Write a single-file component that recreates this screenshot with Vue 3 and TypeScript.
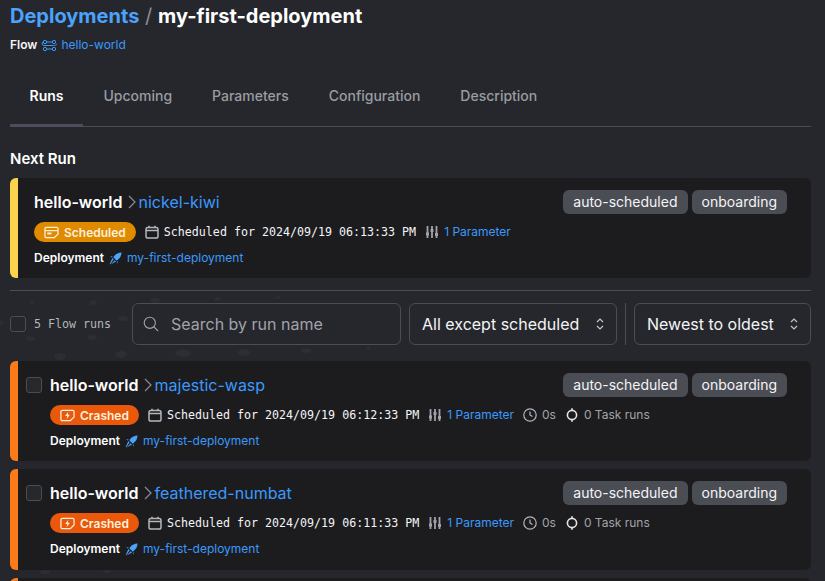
<script setup lang="ts">
interface FlowRun {
  name: string
  time: string
}

const tabs = ['Runs', 'Upcoming', 'Parameters', 'Configuration', 'Description']
const tags = ['auto-scheduled', 'onboarding']

const runs: FlowRun[] = [
  { name: 'majestic-wasp', time: '2024/09/19 06:12:33 PM' },
  { name: 'feathered-numbat', time: '2024/09/19 06:11:33 PM' },
]

// faint speckle that sits behind the run list
const spots = [
  [30, 301, 4, 3], [90, 300, 7, 5], [150, 298, 10, 5], [214, 297, 7, 4], [276, 296, 5, 3],
  [118, 316, 10, 5], [26, 336, 9, 5], [88, 335, 9, 5], [54, 353, 12, 7], [115, 351, 12, 7],
  [175, 349, 16, 8], [238, 349, 12, 7], [301, 348, 10, 5], [366, 347, 5, 3], [0, 320, 3, 5],
  [40, 570, 10, 4], [103, 570, 8, 3],
]
</script>

<template>
  <div class="page">
    <span
      v-for="(s, i) in spots"
      :key="i"
      class="spot"
      :style="{ left: s[0] + 'px', top: s[1] + 'px', width: s[2] + 'px', height: s[3] + 'px' }"
    ></span>

    <h1 class="title"><a>Deployments</a> <span class="slash">/</span> my-first-deployment</h1>
    <div class="meta-line flow-line">
      <b>Flow</b>
      <svg class="flow-icon" viewBox="0 0 16 13" fill="none" stroke="currentColor" stroke-width="1">
        <circle cx="4" cy="3" r="1.700" />
        <circle cx="13" cy="3" r="1.700" />
        <circle cx="4" cy="10" r="1.700" />
        <circle cx="13" cy="10" r="1.700" />
        <path d="M5.700 3h5.600M5.700 10h5.600M2.300 3C.5 3 .5 6.500 3 6.500h9.500c1.500 0 3.200-.3 3.200-1.700" />
      </svg>
      <a>hello-world</a>
    </div>

    <nav class="tabs">
      <span v-for="(tab, i) in tabs" :key="tab" class="tab" :class="{ active: i === 0 }">{{ tab }}</span>
    </nav>

    <h2 class="section">Next Run</h2>

    <section class="card next">
      <div class="card-body">
        <div class="row-top">
          <div class="run-name">
            <b>hello-world</b>
            <svg class="chevron" viewBox="0 0 8 16" fill="none" stroke="currentColor" stroke-width="1.200"><path d="M1 2l6 6-6 6" /></svg>
            <a>nickel-kiwi</a>
          </div>
          <div class="tags"><span v-for="tag in tags" :key="tag" class="tag">{{ tag }}</span></div>
        </div>
        <div class="row-meta">
          <span class="pill scheduled">
            <svg viewBox="0 0 16 16" fill="none" stroke="currentColor" stroke-width="1.300">
              <path d="M2.500 2.500h11A1.500 1.500 0 0 1 15 4v5.500l-4 4H2.500A1.500 1.500 0 0 1 1 12V4a1.500 1.500 0 0 1 1.500-1.500z" />
              <path d="M1 6h14" />
              <path fill="currentColor" stroke="none" d="M3.500 8h4.500v2H3.500z" />
            </svg>
            Scheduled
          </span>
          <svg class="ic cal" viewBox="0 0 14 14" fill="none" stroke="currentColor" stroke-width="1.500">
            <rect x="1" y="2.500" width="12" height="10.500" rx="1.800" />
            <path d="M1 5.500h12M4 .8v2M10 .8v2" />
          </svg>
          <span class="mono">Scheduled for 2024/09/19 06:13:33 PM</span>
          <svg class="ic sliders" viewBox="0 0 12 14" fill="none" stroke="currentColor" stroke-width="1.800">
            <path d="M1.500 1v12M6 1v12M10.500 1v12" />
            <path stroke-width="3" d="M0 9h3M4.500 5.500h3M9 9.500h3" />
          </svg>
          <a class="small">1 Parameter</a>
        </div>
        <div class="meta-line deploy">
          <b>Deployment</b>
          <svg class="rocket" viewBox="0 0 14 14" fill="currentColor">
            <path d="M13.500.5c-3.400.2-5.600 1.300-7.400 3.400L4.600 5.600l3.800 3.800 1.700-1.500C12.200 6.100 13.300 3.900 13.500.5z" />
            <path d="M3.700 6.500 5 7.800 1.300 13.200.8 12.700zM7.500 10.300 6.200 9 1.800 13.400zM3 5.800l1-1.200-2.800.3zM8.200 10.900l1.200-1-.3 2.800z" />
          </svg>
          <a>my-first-deployment</a>
        </div>
      </div>
    </section>

    <hr class="rule" />

    <div class="controls">
      <label class="count"><span class="check"></span><span class="mono dim">5 Flow runs</span></label>
      <div class="field search">
        <svg viewBox="0 0 16 16" fill="none" stroke="currentColor" stroke-width="1.100">
          <circle cx="6.800" cy="6.800" r="5.600" />
          <path d="m11 11 4.200 4.200" />
        </svg>
        <span>Search by run name</span>
      </div>
      <div class="field select status">
        <span>All except scheduled</span>
        <svg viewBox="0 0 8 12" fill="none" stroke="currentColor" stroke-width="1.200"><path d="M1 4l3-3 3 3M1 8l3 3 3-3" /></svg>
      </div>
      <span class="vr"></span>
      <div class="field select sort">
        <span>Newest to oldest</span>
        <svg viewBox="0 0 8 12" fill="none" stroke="currentColor" stroke-width="1.200"><path d="M1 4l3-3 3 3M1 8l3 3 3-3" /></svg>
      </div>
    </div>

    <section v-for="run in runs" :key="run.name" class="card crashed">
      <span class="check card-check"></span>
      <div class="card-body">
        <div class="row-top">
          <div class="run-name">
            <b>hello-world</b>
            <svg class="chevron" viewBox="0 0 8 16" fill="none" stroke="currentColor" stroke-width="1.200"><path d="M1 2l6 6-6 6" /></svg>
            <a>{{ run.name }}</a>
          </div>
          <div class="tags"><span v-for="tag in tags" :key="tag" class="tag">{{ tag }}</span></div>
        </div>
        <div class="row-meta">
          <span class="pill crash">
            <svg viewBox="0 0 16 16" fill="none" stroke="currentColor" stroke-width="1.300">
              <path d="M2.500 2.500h11A1.500 1.500 0 0 1 15 4v5.500l-4 4H2.500A1.500 1.500 0 0 1 1 12V4a1.500 1.500 0 0 1 1.500-1.500z" />
              <path fill="currentColor" stroke="none" d="M8.800 4 5.500 8.500h2.200L7 12l3.500-4.800H8.300z" />
            </svg>
            Crashed
          </span>
          <svg class="ic cal" viewBox="0 0 14 14" fill="none" stroke="currentColor" stroke-width="1.500">
            <rect x="1" y="2.500" width="12" height="10.500" rx="1.800" />
            <path d="M1 5.500h12M4 .8v2M10 .8v2" />
          </svg>
          <span class="mono">Scheduled for {{ run.time }}</span>
          <svg class="ic sliders" viewBox="0 0 12 14" fill="none" stroke="currentColor" stroke-width="1.800">
            <path d="M1.500 1v12M6 1v12M10.500 1v12" />
            <path stroke-width="3" d="M0 9h3M4.500 5.500h3M9 9.500h3" />
          </svg>
          <a class="small">1 Parameter</a>
          <svg class="ic clock" viewBox="0 0 14 14" fill="none" stroke="currentColor" stroke-width="1.200">
            <circle cx="7" cy="7" r="6.200" />
            <path d="M7 3.500V7l2.500 1.500" />
          </svg>
          <span class="small dim">0s</span>
          <svg class="ic task" viewBox="0 0 14 14" fill="none" stroke="currentColor" stroke-width="1.600">
            <circle cx="7" cy="7" r="4.600" />
            <path d="M7 .2v2.200M7 11.600v2.200" />
          </svg>
          <span class="small dim">0 Task runs</span>
        </div>
        <div class="meta-line deploy">
          <b>Deployment</b>
          <svg class="rocket" viewBox="0 0 14 14" fill="currentColor">
            <path d="M13.500.5c-3.400.2-5.600 1.300-7.400 3.400L4.600 5.600l3.800 3.800 1.700-1.500C12.200 6.100 13.300 3.900 13.500.5z" />
            <path d="M3.700 6.500 5 7.800 1.300 13.200.8 12.700zM7.500 10.300 6.200 9 1.800 13.400zM3 5.800l1-1.200-2.800.3zM8.200 10.900l1.200-1-.3 2.800z" />
          </svg>
          <a>my-first-deployment</a>
        </div>
      </div>
    </section>
    <!-- only the top edge of the next run is on screen -->
    <div class="card crashed"></div>
  </div>
</template>

<style scoped>
.page {
  position: relative;
  box-sizing: border-box;
  height: 581px;
  padding: 2px 14px 0 10px;
  overflow: hidden;
  background: #25272c;
  color: #fff;
  font-family: Inter, 'Noto Sans', sans-serif;
}

.spot {
  position: absolute;
  border-radius: 50%;
  background: #2c2e33;
}

a {
  color: #3b99fb;
}

svg {
  flex: none;
}

.title {
  position: relative;
  margin: 0;
  font-size: 20px;
  line-height: 28px;
  font-weight: 700;
}

.title a {
  color: #4ba3fb;
}

.slash {
  margin: 0 1px;
  color: #8b8d94;
  font-weight: 400;
}

.meta-line {
  position: relative;
  display: flex;
  align-items: center;
  font-size: 12px;
  line-height: 16px;
}

.meta-line b {
  font-weight: 600;
}

.flow-line {
  margin-top: 7px;
  gap: 4px;
  color: #3b99fb;
}

.flow-line b {
  color: #f4f4f5;
}

.flow-icon {
  width: 16px;
  height: 13px;
}

.tabs {
  position: relative;
  display: flex;
  gap: 1px;
  margin-top: 24px;
  height: 50px;
  box-sizing: border-box;
  border-bottom: 1px solid #4b4d55;
}

.tab {
  box-sizing: border-box;
  height: 50px;
  padding: 9px 19.500px 0;
  font-size: 14px;
  line-height: 20px;
  font-weight: 500;
  color: #9a9ca3;
}

.tab.active {
  color: #fff;
  font-weight: 600;
  border-bottom: 3px solid #4b4d5f;
}

.section {
  position: relative;
  margin: 21px 0 8px;
  font-size: 15px;
  line-height: 22px;
  font-weight: 600;
}

.card {
  position: relative;
  display: flex;
  box-sizing: border-box;
  height: 100.250px;
  border-left: 8px solid #fb7b1a;
  border-radius: 6px;
  background: #1c1c1f;
}

.card + .card {
  margin-top: 8px;
}

.card.next {
  border-left-color: #fcd34d;
}

.card-body {
  flex: 1;
  min-width: 0;
  padding: 12px 24px 0 16px;
}

.card.crashed .card-body {
  padding-left: 8px;
}

.card-check {
  margin: 16px 0 0 8px;
  background: #26282c;
}

.check {
  flex: none;
  box-sizing: border-box;
  width: 16px;
  height: 16px;
  border: 1px solid #4b4d55;
  border-radius: 3px;
}

.row-top {
  display: flex;
  justify-content: space-between;
  height: 24px;
}

.run-name {
  display: flex;
  align-items: center;
  font-size: 16px;
  line-height: 24px;
}

.run-name b {
  font-weight: 600;
}

.chevron {
  width: 8px;
  height: 16px;
  margin: 0 3px 0 5px;
  color: #8b8d94;
}

.tags {
  display: flex;
  gap: 4px;
}

.tag {
  padding: 0 10px;
  border-radius: 6px;
  background: #4b4d55;
  color: #f4f4f5;
  font-size: 14px;
  line-height: 24px;
}

.row-meta {
  display: flex;
  align-items: center;
  height: 20px;
  margin-top: 8px;
  color: #f4f4f5;
}

.pill {
  display: flex;
  align-items: center;
  gap: 5px;
  box-sizing: border-box;
  height: 20px;
  padding: 0 10px;
  border-radius: 10px;
  color: #fdf0dc;
  font-size: 12px;
  font-weight: 600;
}

.pill svg {
  width: 15px;
  height: 15px;
}

.pill.scheduled {
  background: #e08a00;
}

.pill.crash {
  background: #ea580c;
}

.mono {
  font-family: 'DejaVu Sans Mono', 'Liberation Mono', monospace;
  font-size: 11.650px;
  line-height: 16px;
  white-space: nowrap;
}

.dim {
  color: #a1a3a9;
}

.count .dim {
  color: #b4b6bb;
}

.small {
  font-size: 12px;
  line-height: 16px;
  white-space: nowrap;
}

.ic {
  width: 14px;
  height: 14px;
  color: #b4b6bb;
}

.cal {
  margin: 0 5px 0 9px;
}

.sliders {
  width: 12px;
  margin: 0 6px 0 10px;
  color: #a1a3a9;
}

.clock {
  margin: 0 5px 0 9px;
}

.task {
  margin: 0 5px 0 9px;
  color: #e4e4e7;
}

.deploy {
  height: 20px;
  margin-top: 6px;
}

.rocket {
  width: 13px;
  height: 13px;
  margin: 0 5px;
  color: #4ba3fb;
}

.rule {
  position: relative;
  margin: 11.750px 0 12px;
  border: 0;
  border-top: 1px solid #4b4d55;
}

.controls {
  position: relative;
  display: flex;
  align-items: center;
  height: 42px;
  margin-bottom: 16px;
}

.count {
  display: flex;
  align-items: center;
  gap: 8px;
  width: 122px;
}

.field {
  display: flex;
  align-items: center;
  box-sizing: border-box;
  height: 42px;
  border: 1px solid #4b4d55;
  border-radius: 6px;
  font-size: 16px;
  color: #f4f4f5;
}

.search {
  width: 269px;
  gap: 12px;
  padding-left: 10px;
  color: #a1a3a9;
}

.search svg {
  width: 16px;
  height: 16px;
}

.select {
  justify-content: space-between;
  padding: 0 12px;
}

.select svg {
  width: 8px;
  height: 12px;
  color: #c4c5c9;
}

.status {
  width: 208px;
  margin-left: 8px;
}

.vr {
  width: 1px;
  height: 42px;
  margin: 0 8px;
  background: #4b4d55;
}

.sort {
  flex: 1;
}
</style>

<style>
html,
body {
  margin: 0;
  overflow: hidden;
  background: #25272c;
}
</style>
